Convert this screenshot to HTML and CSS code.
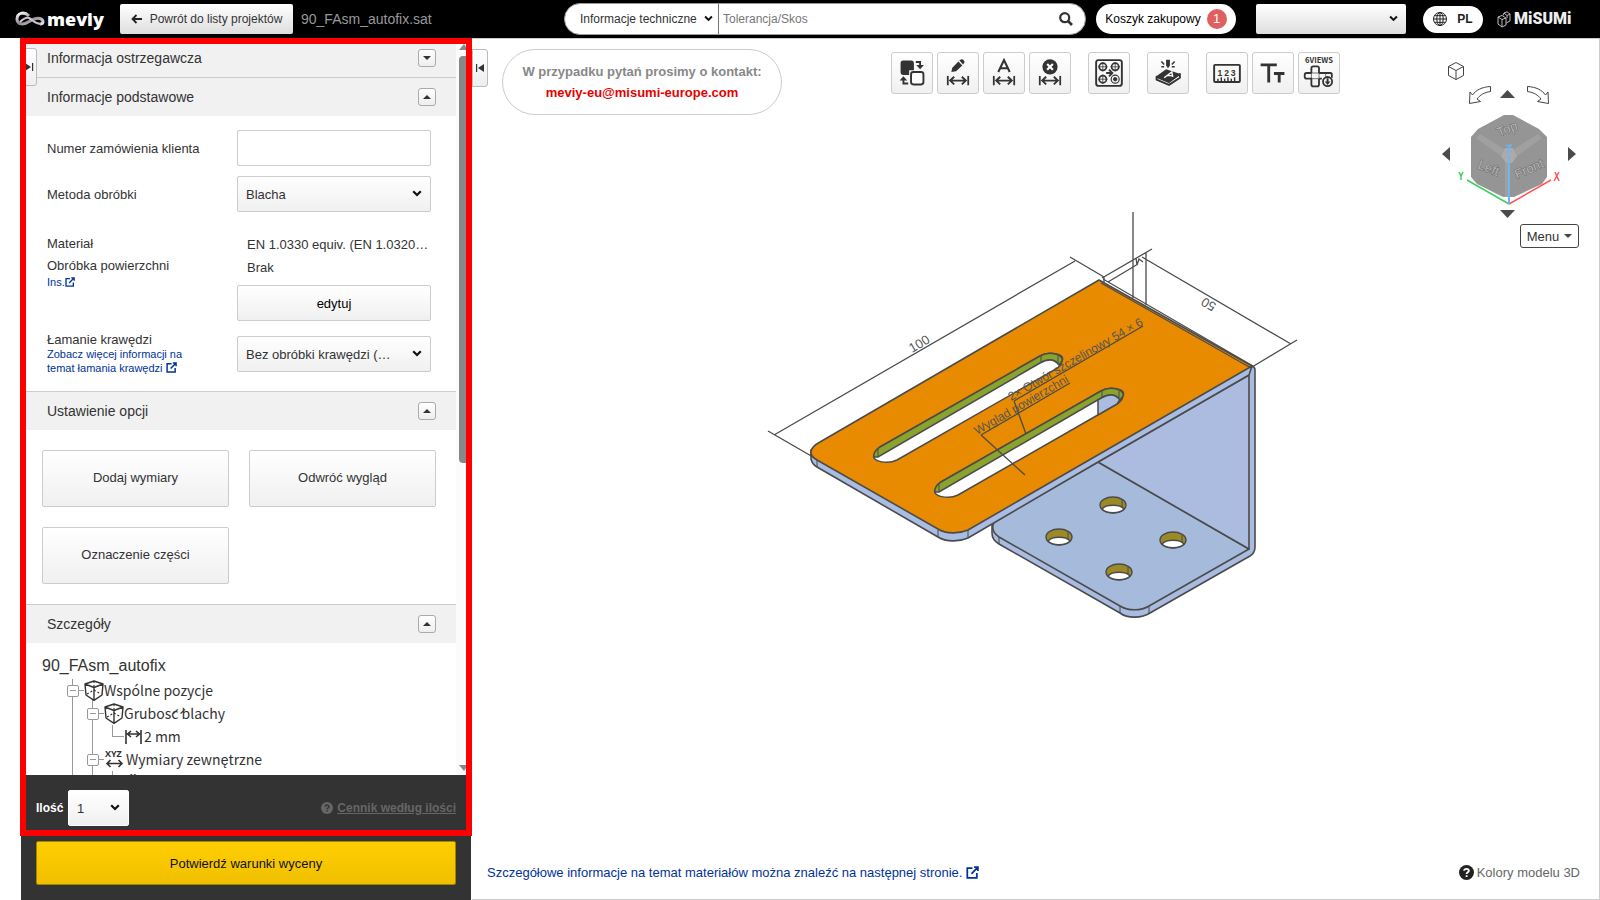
FILE: index.html
```html
<!DOCTYPE html>
<html lang="pl">
<head>
<meta charset="utf-8">
<title>meviy – 90_FAsm_autofix</title>
<link rel="stylesheet" href="styles.css">
</head>
<body>
<svg class="defs" width="0" height="0" aria-hidden="true">
  <defs>
    <symbol id="ext" viewBox="0 0 12 12"><path d="M6 2H1.200V11H10V6.500M7.500 1H11V4.500M11 1 5 7.200" fill="none" stroke="currentColor" stroke-width="1.600"/></symbol>
    <symbol id="help" viewBox="0 0 14 14"><circle cx="7" cy="7" r="7" fill="currentColor"/><path d="M4.800 5.400C4.900 3 9.200 3 9.200 5.400 9.200 6.900 7.100 6.800 7.100 8.500M7.100 9.600V11.200" fill="none" stroke="var(--q,#fff)" stroke-width="1.700"/></symbol>
    <symbol id="span" viewBox="0 0 24 10"><path d="M1.200 0V10M22.800 0V10M3.500 5H20.500M8 1 3.800 5 8 9M16 1 20.200 5 16 9" fill="none" stroke="#333" stroke-width="2"/></symbol>
    <symbol id="part" viewBox="0 0 20 21"><path d="M10 1 19 4 18 15 10 20.300 2 15 1 4ZM1 4 10 7.500 19 4M10 7.500V20" fill="none" stroke="#333" stroke-width="1.400" stroke-linejoin="round"/><path d="M10 1V8M3 14 10 10 17 14" fill="none" stroke="#333" stroke-width="1.200" stroke-dasharray="2 2"/></symbol>
    <symbol id="chev" viewBox="0 0 10 7"><path d="M1.200 1.200 5 5 8.800 1.200" fill="none" stroke="currentColor" stroke-width="2.200"/></symbol>
  </defs>
</svg>

<header class="topbar">
  <div class="brand">
    <svg width="31" height="19" viewBox="0 0 31 19" aria-hidden="true">
      <defs><linearGradient id="rib" x1="0" y1="0" x2="1" y2="1"><stop offset="0" stop-color="#fff"/><stop offset=".5" stop-color="#8d8590"/><stop offset="1" stop-color="#e8e4ea"/></linearGradient></defs>
      <path d="M14 6C9 1 2 3 2 9 2 15 9 15 14 11.500 18 9 21 7.500 25 8.500 29 10 29 14 25 14" fill="none" stroke="url(#rib)" stroke-width="3"/>
      <path d="M5 12C9 8 11 7 14 8 18 10 20 14 26 14" fill="none" stroke="#c9c3cc" stroke-width="2"/>
    </svg>
    <span class="brand-name">meviy</span>
  </div>
  <button class="back" type="button">
    <svg width="11" height="10" viewBox="0 0 11 10" aria-hidden="true"><path d="M11 5H2M5.500 1 1.500 5 5.500 9" fill="none" stroke="#222" stroke-width="1.800"/></svg>
    Powrót do listy projektów
  </button>
  <span class="file-name">90_FAsm_autofix.sat</span>
  <form class="search">
    <div class="pick search-pick">
      <select aria-label="Zakres wyszukiwania"><option>Informacje techniczne</option></select>
      <svg class="pick-icon" width="9" height="7"><use href="#chev"/></svg>
    </div>
    <input type="text" placeholder="Tolerancja/Skos" aria-label="Szukaj">
    <button type="button" aria-label="Szukaj"><svg width="14" height="14" viewBox="0 0 14 14"><circle cx="5.700" cy="5.700" r="4.500" fill="none" stroke="#333" stroke-width="2.200"/><path d="M9 9 13 13" stroke="#333" stroke-width="2.600"/></svg></button>
  </form>
  <a class="cart" href="#">Koszyk zakupowy <span class="badge">1</span></a>
  <div class="pick user-pick">
    <select aria-label="Konto"><option></option></select>
    <svg class="pick-icon" width="9" height="7"><use href="#chev"/></svg>
  </div>
  <button class="lang" type="button">
    <svg width="14" height="14" viewBox="0 0 14 14" fill="none" stroke="#222" stroke-width="1"><circle cx="7" cy="7" r="6.500"/><ellipse cx="7" cy="7" rx="3.200" ry="6.500"/><path d="M7 .5V13.500M.5 7H13.500M1.500 3.700H12.500M1.500 10.300H12.500"/></svg>
    PL
  </button>
  <div class="misumi">
    <svg width="14" height="17" viewBox="0 0 14 17" fill="none" stroke="#bbb" stroke-width="1" aria-hidden="true"><path d="M1 6 5 4.500 9 7V14L5 16 1 13ZM1 6 5 8.500 9 7M5 8.500V16M6 4.500 7 2 10 .8 13 3V10L9 12M7 2 10 4.500 13 3M10 4.500V7"/></svg>
    <span>MiSUMi</span>
  </div>
</header>

<main class="work">
  <aside class="side">
    <div class="scroller">
      <div class="panel">
        <section>
          <h2 class="bar"><span>Informacja ostrzegawcza</span><button class="fold down" type="button" aria-label="Rozwiń"></button></h2>
        </section>
        <section>
          <h2 class="bar"><span>Informacje podstawowe</span><button class="fold" type="button" aria-label="Zwiń"></button></h2>
          <div class="fields">
            <div class="row"><label for="order">Numer zamówienia klienta</label><input id="order" class="box" type="text"></div>
            <div class="row"><label for="method">Metoda obróbki</label>
              <div class="pick box"><select id="method"><option>Blacha</option></select><svg class="pick-icon" width="10" height="7"><use href="#chev"/></svg></div>
            </div>
            <div class="row material">
              <div class="names"><span>Materiał</span><span>Obróbka powierzchni</span><a href="#">Ins.<svg width="10" height="10"><use href="#ext"/></svg></a></div>
              <div class="values"><span>EN 1.0330 equiv. (EN 1.0320…</span><span>Brak</span><button class="box" type="button">edytuj</button></div>
            </div>
            <div class="row edge">
              <div class="names"><label for="edge">Łamanie krawędzi</label><a href="#">Zobacz więcej informacji na temat łamania krawędzi <svg width="11" height="11"><use href="#ext"/></svg></a></div>
              <div class="pick box"><select id="edge"><option>Bez obróbki krawędzi (…</option></select><svg class="pick-icon" width="10" height="7"><use href="#chev"/></svg></div>
            </div>
          </div>
        </section>
        <section>
          <h2 class="bar"><span>Ustawienie opcji</span><button class="fold" type="button" aria-label="Zwiń"></button></h2>
          <div class="options">
            <button type="button">Dodaj wymiary</button>
            <button type="button">Odwróć wygląd</button>
            <button type="button">Oznaczenie części</button>
          </div>
        </section>
        <section>
          <h2 class="bar"><span>Szczegóły</span><button class="fold" type="button" aria-label="Zwiń"></button></h2>
          <div class="details">
            <h3>90_FAsm_autofix</h3>
            <ul class="tree">
              <li class="l1"><i class="minus"></i><i class="dash"></i><svg width="20" height="21"><use href="#part"/></svg><span>Wspólne pozycje</span></li>
              <li class="l2"><i class="minus"></i><i class="dash"></i><svg width="20" height="21"><use href="#part"/></svg><span>Grubos&#769;c&#769; blachy</span></li>
              <li class="l3"><i class="elbow"></i><svg width="17" height="14" viewBox="0 0 17 14"><path d="M1 0V14M16 0V14M2 4H15M6 1 2.500 4 6 7M11 1 14.500 4 11 7" fill="none" stroke="#333" stroke-width="1.600"/></svg><span class="gap">2 mm</span></li>
              <li class="l2"><i class="minus"></i><i class="dash"></i><svg class="xyz" width="20" height="21" viewBox="0 0 20 21"><text x="1" y="8">XYZ</text><path d="M3 14.500H18M6.500 11 3 14.500 6.500 18M14.500 11 18 14.500 14.500 18" fill="none" stroke="#333" stroke-width="1.600"/></svg><span class="gap">Wymiary zewnętrzne</span></li>
              <li class="l3"><i class="elbow"></i><svg class="xyz" width="17" height="21" viewBox="0 0 17 21"><text x="5" y="8">X</text></svg></li>
            </ul>
          </div>
        </section>
      </div>
      <div class="track"><i class="up"></i><i class="thumb"></i><i class="dn"></i></div>
      <button class="tab tab-left" type="button" aria-label="Rozwiń panel"><svg width="10" height="8" viewBox="0 0 10 8"><path d="M1 0 7 4 1 8ZM8 0H9.200V8H8Z" fill="#333"/></svg></button>
    </div>
    <div class="order">
      <div class="qty">
        <label for="qty">Ilość</label>
        <div class="pick box"><select id="qty"><option>1</option></select><svg class="pick-icon" width="10" height="7"><use href="#chev"/></svg></div>
        <a class="prices" href="#"><svg width="12" height="12"><use href="#help"/></svg><span>Cennik według ilości</span></a>
      </div>
      <button class="confirm" type="button">Potwierdź warunki wyceny</button>
    </div>
    <div class="frame"></div>
  </aside>

  <div class="viewer">
    <svg class="model" viewBox="472 39 1127 860" role="img" aria-label="Model 3D">
      <g stroke="#4b4b4b" stroke-width="1.600" stroke-linejoin="round">
        <path d="M1252 366Q1255 367 1255 370V547Q1255 553 1250 556L1150 613C1142 618 1128 619 1120 613L999 544Q992 540 992 533V523L1098 455Z" fill="#a9bbe0"/>
        <path d="M1098 462 1249 549 1149 606C1141 611 1128 611 1120 606L999 537Q990 531 994 522Z" fill="#a6bbdb"/>
        <path d="M1098 462 1249 375V549Z" fill="#abbce0"/>
        <path d="M999 537V544M1120 606V613M1149 606V613" stroke-width="1"/>
        <path d="M811 450V459Q812 464 817 467L938 537C946 542 959 542 968 538L1098 462 1249 375 1252 366Z" fill="#a9bde3"/>
        <path d="M817 460V467M938 530V537M968 530V538" stroke-width="1"/>
        <path d="M1099 280 820 442C809 448 808 455 817 460L938 529C946 534 959 534 968 530L1252 366Z" fill="#e98b00"/>
        <path d="M1101 283 1251 368M1103 279 1253 366" fill="none" stroke-width="1.200"/>
      </g>
      <g stroke="#4b4b4b" stroke-width="1.500">
        <path d="M1040 356C1048 351 1066 353 1062 361Q1061 366 1056 369L897 460C887 465 871 461 874 455Q875 450 880 447Z" fill="#fff"/>
        <path d="M874 457Q873 452 880 447L1040 356C1050 350 1064 355 1062 361L1059 365C1054 358 1047 359 1040 363L878 457Z" fill="#8aa32c"/>
        <path d="M1041 356V362M1058 356V363M878 449V457" stroke-width="1"/>
      </g>
      <g transform="translate(61 35)" stroke="#4b4b4b" stroke-width="1.500">
        <path d="M1040 356C1048 351 1066 353 1062 361Q1061 366 1056 369L897 460C887 465 871 461 874 455Q875 450 880 447Z" fill="#fff"/>
        <path d="M1037 365Q1053 354 1060 363L1056 369 1037 380Z" fill="#abbce0"/>
        <path d="M874 457Q873 452 880 447L1040 356C1050 350 1064 355 1062 361L1059 365C1054 358 1047 359 1040 363L878 457Z" fill="#8aa32c"/>
        <path d="M1041 356V362M1058 356V363M878 449V457" stroke-width="1"/>
      </g>
      <g stroke="#4b4b4b" stroke-width="1.400">
        <g id="hole"><ellipse cx="1113" cy="505" rx="13" ry="8" fill="#9c8a26"/><path d="M1102 509C1106 504 1120 504 1124 509 1120 514 1106 514 1102 509Z" fill="#fff"/><path d="M1122 500V507" stroke-width="1"/></g>
        <use href="#hole" x="-54" y="32"/><use href="#hole" x="60" y="35"/><use href="#hole" x="6" y="67"/>
      </g>
      <path d="M774 435 1075 261M768 431 813 457M1070 257 1104 277M1142 257 1291 344M1252 367 1297 340M1102 278 1152 249M1108 282 1138 264M1133 212V298M1146 253V305M1104 277V282M1014 401 1143 326M1014 401 1026 434M981 435 1070 383M981 435 1025 475M1136 258 1137 265 1139 259 1143 262" fill="none" stroke="#4b4b4b" stroke-width="1.300"/>
      <g class="dims">
        <text transform="translate(912 353) rotate(-30)" font-size="13">100</text>
        <text transform="translate(1217 304) rotate(210)" font-size="13">50</text>
        <text transform="translate(1011 401) rotate(-30)" font-size="12">2× Otwór szczelinowy 54 × 6</text>
        <text transform="translate(977 435) rotate(-30)" font-size="12">Wygląd powierzchni</text>
      </g>
    </svg>

    <div class="tools-row">
      <button class="tab tab-right" type="button" aria-label="Zwiń panel"><svg width="10" height="8" viewBox="0 0 10 8"><path d="M9 0 3 4 9 8ZM1 0H2.200V8H1Z" fill="#333"/></svg></button>
      <p class="contact">W przypadku pytań prosimy o kontakt:<a href="#">meviy-eu@misumi-europe.com</a></p>
      <div class="toolbar">
        <div class="group">
          <button type="button" aria-label="Zamień"><svg viewBox="0 0 42 42"><path d="M9 11Q9 8 12 8H20Q23 8 23 11V18H18V23H12Q9 23 9 20Z" fill="#333"/><rect x="20" y="20" width="13" height="13" rx="2.500" fill="#fff" stroke="#333" stroke-width="2"/><path d="M25 9.500H29.500V14M12 27V32H17" fill="none" stroke="#333" stroke-width="2"/><path d="M25.500 12.500H33.500L29.500 17ZM8 29H16L12 24.500Z" fill="#333"/></svg></button>
          <button type="button" aria-label="Edytuj wymiar"><svg viewBox="0 0 42 42"><path d="M14 20 15 15.500 21.500 9 25.500 13 19 19.200ZM22.500 8 24 6.800Q25.500 6 27 7.500 28.500 9 27.500 10.500L26.300 12Z" fill="#333"/><use href="#span" x="9" y="24" width="24" height="10"/></svg></button>
          <button type="button" aria-label="Wymiar automatyczny"><svg viewBox="0 0 42 42"><path d="M15 20 21 7.500 27 20M17 16H25" fill="none" stroke="#333" stroke-width="2.200"/><use href="#span" x="9" y="24" width="24" height="10"/></svg></button>
          <button type="button" aria-label="Usuń wymiar"><svg viewBox="0 0 42 42"><circle cx="21" cy="14.500" r="8" fill="#333"/><path d="M18 11.500 24 17.500M24 11.500 18 17.500" stroke="#fff" stroke-width="2.200"/><use href="#span" x="9" y="24" width="24" height="10"/></svg></button>
        </div>
        <div class="group">
          <button type="button" aria-label="Kopiuj otwory"><svg viewBox="0 0 42 42" fill="none" stroke="#333"><rect x="7.500" y="7.500" width="27" height="27" rx="2.500" stroke-width="2"/><g stroke-width="1.800"><circle cx="14.500" cy="14.500" r="3.800"/><circle cx="27.500" cy="14.500" r="3.800"/><circle cx="14.500" cy="27.500" r="3.800"/></g><path d="M9.500 14.500H19.500M14.500 9.500V19.500M22.500 14.500H32.500M27.500 9.500V19.500M9.500 27.500H19.500M14.500 22.500V32.500" stroke-width=".8"/><circle cx="27.500" cy="27.500" r="4.200" stroke-width="1.200"/><circle cx="27.500" cy="27.500" r="1.800" fill="#333"/><path d="M18 21H24M21 17.500 24.500 21 21 24.500" stroke-width="2"/></svg></button>
        </div>
        <div class="group">
          <button type="button" aria-label="Grawerowanie"><svg viewBox="0 0 42 42"><path d="M19 7H23V13L21 16 19 13Z" fill="#333"/><path d="M14 9 17 12M28 9 25 12M14 14.500H17M25 14.500H28" stroke="#333" stroke-width="1.600"/><path d="M8 25 19 17 34 22 22 31Z" fill="#333"/><path d="M9 25V28L22 33.500 33.500 26V22L22 30.500Z" fill="#fff" stroke="#333" stroke-width="2" stroke-linejoin="round"/><path d="M17 26 25 20 26 25M20.500 23.500 25.500 24" fill="none" stroke="#fff" stroke-width="1.500"/></svg></button>
        </div>
        <div class="group">
          <button type="button" aria-label="Zmierz"><svg viewBox="0 0 42 42"><rect x="7.500" y="12.500" width="27" height="18" rx="1" fill="none" stroke="#333" stroke-width="2"/><path d="M11.500 27V30M15 25.500V30M18.500 27V30M22 25.500V30M25.500 27V30M29 25.500V30" stroke="#333" stroke-width="1.500"/><text x="11" y="24" class="digits">1</text><text x="18" y="24" class="digits">2</text><text x="25" y="24" class="digits">3</text></svg></button>
          <button type="button" aria-label="Rozmiar tekstu"><svg viewBox="0 0 42 42"><path d="M8 12.500H25M16.500 12V31M22 21.500H33M27.500 21.500V31" fill="none" stroke="#333" stroke-width="3"/></svg></button>
          <button type="button" aria-label="6 widoków"><svg viewBox="0 0 42 42"><text x="21" y="11" text-anchor="middle" class="views">6VIEWS</text><g fill="none" stroke="#333" stroke-width="1.900"><path d="M21 21H33Q34.500 21 34.500 23V26M21 27H24M13 21H8Q6 21 6 23V25Q6 27 8 27H13V33Q13 35 15 35H19Q21 35 21 33V27M13 21V16Q13 14 15 14H19Q21 14 21 16V21"/><circle cx="30" cy="30" r="4.800"/></g><path d="M13 21H21V27H13ZM28 21V25" fill="none" stroke="#333" stroke-width=".7"/><path d="M29 26.500H31V30H33L30 33.500 27 30H29Z" fill="#333"/></svg></button>
        </div>
      </div>
    </div>

    <div class="nav">
      <svg width="150" height="164" viewBox="1435 56 150 164" aria-label="Kostka widoku" role="img">
        <path d="M1456 62.500 1463.500 66.500V75.500L1456 79.500 1448.500 75.500V66.500ZM1448.500 66.500 1456 70.500 1463.500 66.500M1456 70.500V79.500" fill="none" stroke="#444" stroke-width="1"/>
        <path id="turn" d="M1490.500 86.500C1482 87 1476 90 1472.500 95L1470 92 1469.500 103.500 1480.500 101.500 1477 99C1480 95 1484 92.500 1490.500 91.500Z" fill="#fff" stroke="#444"/>
        <use href="#turn" transform="translate(3018 0) scale(-1 1)"/>
        <path d="M1500 98 1507.500 90 1515 98ZM1500 210 1507.500 218 1515 210ZM1450 147V161L1442 154ZM1568 147V161L1576 154Z" fill="#4b4b4b"/>
        <path d="M1504 115H1513L1539 129 1547 137V177L1542 184 1514 197H1503L1477 184 1471 177V137L1478 129Z" fill="#959595"/>
        <path d="M1476 138 1480 134 1504 149 1501 156ZM1542 138 1538 134 1514 149 1517 156ZM1505 162 1509 164V197H1505Z" fill="#a0a0a0"/>
        <path d="M1505 148H1513L1517 156 1512 163H1506L1501 156Z" fill="#ababab"/>
        <g class="faces"><text transform="translate(1499 137) rotate(-22)">Top</text><text transform="translate(1477 168) rotate(22)">Left</text><text transform="translate(1517 179) rotate(-24)">Front</text></g>
        <path d="M1467 180 1509 204" stroke="#3ccf5e" stroke-width="1.500"/><path d="M1551 180 1509 204" stroke="#f55" stroke-width="1.500"/><path d="M1509 156V204" stroke="#6fb4f5" stroke-width="2"/>
        <path d="M1459 172 1461 176 1463 172M1461 176V180" fill="none" stroke="#3ccf5e" stroke-width="1.500"/><path d="M1555 172 1559 181M1559 172 1554 181" stroke="#f55" stroke-width="1.500"/><path d="M1506 146 1511 145 1507 152 1512 151" fill="none" stroke="#6fb4f5" stroke-width="1.500"/>
      </svg>
      <button class="menu" type="button">Menu <i></i></button>
    </div>

    <div class="foot">
      <a href="#">Szczegółowe informacje na temat materiałów można znaleźć na następnej stronie. <svg width="13" height="13"><use href="#ext"/></svg></a>
      <span class="colors"><svg width="15" height="15"><use href="#help"/></svg>Kolory modelu 3D</span>
    </div>
  </div>
</main>
</body>
</html>
```
FILE: styles.css
```css
* { box-sizing: border-box; }

body {
  margin: 0;
  height: 100vh;
  display: flex;
  flex-direction: column;
  overflow: hidden;
  background: #fff;
  color: #333;
  font-family: "Liberation Sans", Arial, sans-serif;
  font-size: 13px;
}

.defs { position: absolute; }

button, input, select {
  font: inherit;
  color: inherit;
  margin: 0;
}

button { cursor: pointer; padding: 0; }
a { color: #003399; text-decoration: none; }
h2, h3, p, ul { margin: 0; padding: 0; font-weight: 400; }

select {
  appearance: none;
  width: 100%;
  height: 100%;
  border: 0;
  background: none;
  padding: 0 32px 0 8px;
  text-overflow: ellipsis;
}

.pick { position: relative; }
.pick-icon {
  position: absolute;
  right: 8px;
  top: calc(50% - 4px);
  color: #111;
  pointer-events: none;
}

/* Top bar */
.topbar {
  flex: none;
  height: 38px;
  display: flex;
  align-items: center;
  padding: 0 28px 0 15px;
  background: #000;
  font-size: 12px;
}
.topbar svg { flex: none; }

.brand { display: flex; align-items: center; gap: 1px; width: 105px; }
.brand-name {
  color: #fff;
  font: 800 18px/24px "Open Sans", sans-serif;
}

.back {
  height: 30px;
  width: 173px;
  display: flex;
  align-items: center;
  justify-content: center;
  gap: 8px;
  border: 0;
  border-radius: 2px;
  background: linear-gradient(#fff, #dedede);
}

.file-name { margin-left: 8px; font-size: 14px; color: #999; }

.search {
  display: flex;
  align-items: center;
  width: 522px;
  height: 32px;
  margin-left: auto;
  border: 1px solid #999;
  border-radius: 16px;
  background: #fff;
  overflow: hidden;
}
.search-pick { width: 154px; height: 100%; border-right: 1px solid #777; }
.search-pick select { padding: 0 16px 0 15px; }
.search-pick .pick-icon { right: 5px; }
.search input { flex: 1; min-width: 0; border: 0; outline: 0; padding: 0 4px; background: none; }
.search input::placeholder { color: #777; }
.search button { border: 0; background: none; width: 38px; display: flex; justify-content: center; }

.cart {
  display: flex;
  align-items: center;
  justify-content: center;
  gap: 6px;
  width: 140px;
  height: 30px;
  margin-left: 10px;
  border-radius: 15px;
  background: #fff;
  color: #000;
}
.badge {
  width: 20px;
  height: 20px;
  border-radius: 50%;
  background: #e06060;
  color: #fff;
  font-size: 13px;
  line-height: 19px;
  text-align: center;
}

.user-pick {
  width: 150px;
  height: 30px;
  margin-left: 20px;
  border-radius: 2px;
  background: linear-gradient(#fff, #dedede);
}

.lang {
  display: flex;
  align-items: center;
  justify-content: center;
  gap: 10px;
  width: 60px;
  height: 27px;
  margin-left: 17px;
  border: 0;
  border-radius: 14px;
  background: #fff;
  color: #222;
  font-weight: 700;
}

.misumi { display: flex; align-items: center; gap: 3px; margin-left: 14px; width: 75px; }
.misumi span { color: #eee; font: 900 16px/20px Roboto, sans-serif; }

/* Work area */
.work { flex: 1; min-height: 0; display: flex; }

.side {
  position: relative;
  flex: none;
  width: 452px;
  margin-left: 20px;
  display: flex;
  flex-direction: column;
}
.scroller { position: relative; flex: 1; min-height: 0; display: flex; overflow: hidden; padding: 0 6px; }
.panel { flex: 1; min-width: 0; height: 0; padding-top: 1px; }
.panel section + section { border-top: 1px solid #ccc; }

.track { flex: none; width: 10px; background: #fbfbfb; padding: 6px 0 4px 3px; display: flex; flex-direction: column; }
.up, .dn { border: 5px solid transparent; border-right-width: 4px; }
.up { border-top: 0; border-bottom: 6px solid #888; margin-bottom: 6px; }
.dn { border-bottom: 0; border-top: 6px solid #888; margin-top: auto; }
.thumb { height: 56%; border-radius: 4px 0 0 4px; background: #888; }

.frame {
  position: absolute;
  inset: 0 0 64px;
  border: 6px solid #f00;
  pointer-events: none;
}

.bar {
  display: flex;
  align-items: center;
  justify-content: space-between;
  height: 38px;
  padding: 0 20px 0 21px;
  background: #f1f1f1;
  font-size: 14px;
}
.fold {
  display: flex;
  align-items: center;
  justify-content: center;
  width: 18px;
  height: 18px;
  border: 1px solid #aaa;
  border-radius: 3px;
  background: linear-gradient(#fff, #eee);
}
.fold::after { content: ""; border: 4px solid transparent; border-top: 0; border-bottom-color: #333; }
.fold.down::after { border: 4px solid transparent; border-bottom: 0; border-top-color: #333; }

.fields { padding: 14px 25px 16px 21px; }
.row { display: grid; grid-template-columns: 1fr 194px; align-items: center; }
.row + .row { margin-top: 10px; }

.box {
  width: 194px;
  height: 36px;
  border: 1px solid #ccc;
  border-radius: 2px;
  background: linear-gradient(#fff, #f0f0f0);
}
input.box { background: #fff; padding: 0 8px; }
button.box { color: #000; }
.box .pick-icon { color: #111; }

.names, .values { display: flex; flex-direction: column; align-items: flex-start; }
.names a { font-size: 11px; line-height: 14px; max-width: 150px; }
.names a svg { vertical-align: -1px; }
.fields .material { margin-top: 21px; align-items: start; }
.material .names span { line-height: 22px; }
.material .names a { line-height: 10px; }
.values span { line-height: 23px; padding-left: 10px; white-space: nowrap; }
.values .box { margin-top: 6px; }
.fields .edge { margin-top: 12px; align-items: start; }
.edge .names label { line-height: 14px; }
.edge .box { margin-top: 3px; }

.options { display: grid; grid-template-columns: 1fr 1fr; gap: 20px; padding: 20px 20px 20px 16px; }
.options button {
  height: 57px;
  padding-bottom: 3px;
  border: 1px solid #ccc;
  border-radius: 2px;
  background: linear-gradient(#fff, #f0f0f0);
}

.details { padding: 13px 16px 0; }
.details h3 { font-size: 16px; line-height: 20px; margin-bottom: 3px; }
.tree { list-style: none; font: 14px/23px "Noto Sans CJK JP", sans-serif; }
.tree li {
  display: flex;
  align-items: center;
  height: 23px;
  white-space: nowrap;
  background: linear-gradient(#999, #999) 30px 0 / 1px 100% no-repeat, linear-gradient(#999, #999) 50px 0 / 1px 100% no-repeat;
}
.tree .l1 { padding-left: 25px; background: linear-gradient(#999, #999) 30px 0 / 1px 100% no-repeat, linear-gradient(#999, #999) 50px 100% / 1px 3px no-repeat; }
.tree .l2 { padding-left: 45px; }
.tree .l3 { padding-left: 70px; }
.tree svg { flex: none; overflow: visible; }
.elbow { border-left: 1px solid #999; border-bottom: 1px solid #999; width: 12px; height: 12px; margin: 0 1px 11px 0; }
.minus { width: 12px; height: 12px; border: 1px solid #999; border-radius: 2px; background: #fff; display: flex; align-items: center; justify-content: center; }
.minus::after { content: ""; width: 6px; height: 1px; background: #999; }
.dash { width: 5px; height: 1px; background: #999; }
.gap { padding-left: 2px; }
.xyz text { font: 700 9px "Open Sans", sans-serif; fill: #333; }

.order {
  flex: none;
  margin: 0 1px;
  padding: 15px;
  background: #333;
}
.qty { display: flex; align-items: center; gap: 5px; color: #fff; }
.qty label { width: 27px; font-size: 12px; font-weight: 700; }
.qty .box { width: 61px; color: #333; border-color: #fff; }
.prices { --q: #333; margin-left: auto; display: flex; align-items: center; gap: 4px; color: #666; font-size: 12px; font-weight: 700; }
.prices span { text-decoration: underline; }
.confirm {
  width: 100%;
  height: 44px;
  margin-top: 15px;
  border: 1px solid #a68500;
  border-radius: 2px;
  background: linear-gradient(#ffce00, #f0c000);
  color: #111;
}

/* 3D viewer */
.viewer {
  position: relative;
  flex: 1;
  min-width: 0;
  display: flex;
  flex-direction: column;
  border: 1px solid #ccc;
  border-left: 0;
}
.model { position: absolute; inset: 0; width: 100%; height: 100%; }
.dims text { fill: #555; }

.tools-row { position: relative; display: flex; align-items: flex-start; padding-top: 10px; }
.tab {
  display: flex;
  align-items: center;
  justify-content: center;
  width: 16px;
  height: 38px;
  border: 1px solid #bbb;
  border-radius: 0 3px 3px 0;
  background: linear-gradient(#fff, #eee);
}
.tab-left { position: absolute; left: 1px; top: 10px; }

.contact {
  width: 280px;
  margin-left: 14px;
  padding: 11px 0;
  border: 1px solid #ccc;
  border-radius: 33px;
  background: #fff;
  color: #888;
  font-weight: 700;
  line-height: 21px;
  text-align: center;
}
.contact a { display: block; color: #e60000; }

.toolbar { display: flex; gap: 17px; margin: 3px 259px 0 auto; }
.group { display: flex; gap: 4px; }
.group button {
  width: 42px;
  height: 42px;
  border: 1px solid #ccc;
  border-radius: 3px;
  background: linear-gradient(#fff, #f0f0f0);
}
.group svg { display: block; width: 40px; height: 40px; }
.digits { font: 700 9px "Liberation Sans", sans-serif; fill: #333; }
.views { font: 600 8px "Noto Sans CJK JP", sans-serif; fill: #333; }

.nav {
  position: absolute;
  top: 17px;
  right: 14px;
  display: flex;
  flex-direction: column;
  align-items: flex-end;
  gap: 4px;
}
.faces text { font-size: 13px; fill: #b4b4b4; stroke: #6c6c6c; stroke-width: 1; paint-order: stroke; }
.menu {
  display: flex;
  align-items: center;
  justify-content: center;
  gap: 5px;
  width: 59px;
  height: 24px;
  margin-right: 6px;
  border: 1px solid #444;
  border-radius: 3px;
  background: #fff;
}
.menu i { border: 4px solid transparent; border-bottom: 0; border-top-color: #444; }

.foot {
  position: relative;
  display: flex;
  align-items: center;
  justify-content: space-between;
  margin-top: auto;
  padding: 0 19px 19px 15px;
}
.foot a svg { vertical-align: -2px; }
.colors { --q: #fff; display: flex; align-items: center; gap: 3px; color: #666; }
.colors svg { color: #222; }
```
